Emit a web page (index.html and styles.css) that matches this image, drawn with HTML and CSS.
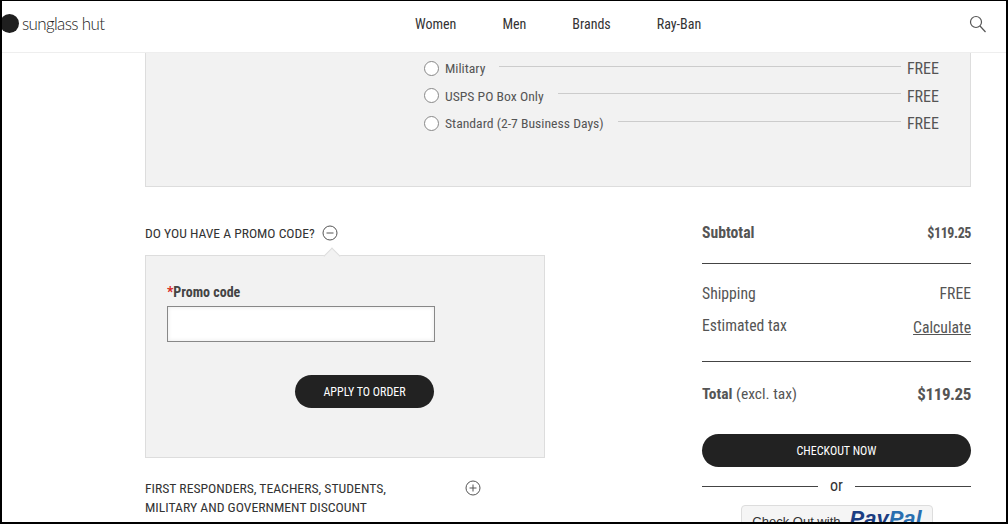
FILE: index.html
```html
<!DOCTYPE html>
<html lang="en">
<head>
  <meta charset="UTF-8">
  <title>Sunglass Hut - Cart</title>
  <link rel="stylesheet" href="styles.css">
</head>
<body>
  <div class="frame">
    <header class="topbar">
      <a class="logo"><span class="logo-dot"></span><span class="logo-text">sunglass hut</span></a>
      <nav class="nav">
        <a>Women</a>
        <a>Men</a>
        <a>Brands</a>
        <a>Ray-Ban</a>
      </nav>
      <svg class="search" width="18" height="18" viewBox="0 0 18 18" fill="none" stroke="#555" stroke-width="1.2">
        <circle cx="7" cy="7" r="5.5"/>
        <path d="M11 11l5.5 6"/>
      </svg>
    </header>

    <section class="shipping">
      <div class="ship-row">
        <span class="radio"></span><span class="ship-name">Military</span><span class="leader"></span><span class="ship-price">FREE</span>
      </div>
      <div class="ship-row">
        <span class="radio"></span><span class="ship-name">USPS PO Box Only</span><span class="leader"></span><span class="ship-price">FREE</span>
      </div>
      <div class="ship-row">
        <span class="radio"></span><span class="ship-name">Standard (2-7 Business Days)</span><span class="leader"></span><span class="ship-price">FREE</span>
      </div>
    </section>

    <div class="columns">
      <div class="left-col">
        <div class="promo-head">
          <span>DO YOU HAVE A PROMO CODE?</span>
          <svg class="toggle" width="16" height="16" viewBox="0 0 16 16" fill="none" stroke="#555" stroke-width="1">
            <circle cx="8" cy="8" r="7"/>
            <path d="M4.5 8h7"/>
          </svg>
        </div>
        <div class="promo-box">
          <label class="promo-label"><span class="req">*</span>Promo code</label>
          <input class="promo-input" type="text">
          <button class="btn btn-apply">APPLY TO ORDER</button>
        </div>
        <div class="discount">
          <span>FIRST RESPONDERS, TEACHERS, STUDENTS,<br>MILITARY AND GOVERNMENT DISCOUNT</span>
          <svg class="toggle" width="16" height="16" viewBox="0 0 16 16" fill="none" stroke="#555" stroke-width="1">
            <circle cx="8" cy="8" r="7"/>
            <path d="M4.5 8h7M8 4.5v7"/>
          </svg>
        </div>
      </div>

      <aside class="summary">
        <div class="sum-row sum-sub"><b>Subtotal</b><b class="sub-price">$119.25</b></div>
        <div class="sum-group">
          <div class="sum-row"><span>Shipping</span><span>FREE</span></div>
          <div class="sum-row sum-tax"><span>Estimated tax</span><a class="calc">Calculate</a></div>
        </div>
        <div class="sum-row sum-total"><span><b>Total</b> (excl. tax)</span><b class="total-price">$119.25</b></div>
        <button class="btn btn-checkout">CHECKOUT NOW</button>
        <div class="or"><span>or</span></div>
        <div class="paypal"><span class="pp-text">Check Out with</span><span class="pp-logo">Pay<i>Pal</i></span></div>
      </aside>
    </div>
  </div>
</body>
</html>
```

FILE: styles.css
```css
* {
  box-sizing: border-box;
}

body {
  margin: 0;
  font-family: Roboto, "Liberation Sans", sans-serif;
  font-stretch: 85%;
  color: #555;
  background: #fff;
}

.frame {
  width: 1008px;
  height: 524px;
  overflow: hidden;
  border: 2px solid #000;
  border-top-width: 1px;
  background: #fff;
}

.topbar {
  display: flex;
  align-items: center;
  height: 52px;
  padding-bottom: 6px;
  border-bottom: 1px solid #eee;
}

.logo {
  display: flex;
  align-items: center;
  width: 413px;
  flex: none;
}

.logo-dot {
  width: 19px;
  height: 19px;
  margin-left: -2px;
  border-radius: 50%;
  background: #1f1f1f;
}

.logo-text {
  margin-left: 3px;
  font-family: Lato, sans-serif;
  font-size: 17px;
  font-weight: 300;
  letter-spacing: -0.65px;
  color: #222;
}

.nav {
  display: flex;
  gap: 46px;
  font-size: 14px;
  color: #333;
}

.search {
  margin-left: auto;
  margin-right: 19px;
}

.shipping {
  width: 826px;
  height: 134px;
  margin-left: 143px;
  padding: 2px 31px 0 278px;
  background: #f2f2f2;
  border: 1px solid #ddd;
  border-top: 0;
}

.ship-row {
  display: flex;
  align-items: center;
  height: 27.5px;
  font-size: 13.7px;
}

.radio {
  width: 15px;
  height: 15px;
  margin: -1px 6px 0 0;
  border: 1px solid #888;
  border-radius: 50%;
  background: #fff;
}

.ship-name {
  margin-top: -1px;
}

.leader {
  flex: 1;
  height: 1px;
  margin: -5px 6px 0 14px;
  background: #ccc;
}

.ship-price {
  font-size: 16px;
}

.columns {
  display: flex;
  margin-left: 143px;
  width: 826px;
  padding-top: 36px;
}

.left-col {
  width: 400px;
}

.promo-head {
  display: flex;
  align-items: center;
  gap: 7px;
  height: 20px;
  font-size: 13.6px;
  color: #333;
}

.promo-box {
  display: flex;
  flex-direction: column;
  position: relative;
  height: 203px;
  margin-top: 12px;
  padding: 29px 21px 0;
  background: #f2f2f2;
  border: 1px solid #ddd;
}

.promo-box::before {
  content: "";
  position: absolute;
  top: -6px;
  left: 180px;
  width: 11px;
  height: 11px;
  background: #f2f2f2;
  border-top: 1px solid #ddd;
  border-left: 1px solid #ddd;
  transform: rotate(45deg);
}

.promo-label {
  font-size: 14px;
  line-height: 15px;
  font-weight: 700;
  color: #444;
}

.req {
  color: #d9281e;
}

.promo-input {
  width: 268px;
  height: 36px;
  margin-top: 6px;
  border: 1px solid #888;
  background: #fff;
  box-shadow: inset 0 0 4px #e8e8e8;
}

.btn {
  border: 0;
  border-radius: 17px;
  background: #222;
  color: #fff;
  font-family: inherit;
  font-stretch: 85%;
  font-size: 12px;
  font-weight: 400;
}

.btn-apply {
  width: 139px;
  height: 33px;
  margin: 33px 0 0 128px;
}

.discount {
  display: flex;
  align-items: flex-start;
  margin-top: 21px;
  font-size: 13.7px;
  line-height: 19px;
  color: #333;
}

.discount .toggle {
  margin: 1px 0 0 79px;
}

.summary {
  width: 269px;
  margin-left: auto;
  font-size: 15.7px;
  line-height: 18px;
}

.sum-row {
  display: flex;
  justify-content: space-between;
  align-items: center;
}

.sum-sub {
  height: 40px;
  padding-bottom: 20px;
}

.sub-price {
  font-size: 14px;
  letter-spacing: -0.4px;
}

.sum-group {
  padding: 21px 0 24px;
  border-top: 1px solid #444;
  border-bottom: 1px solid #444;
}

.sum-tax {
  margin-top: 12px;
}

.calc {
  margin-top: 4px;
  text-decoration: underline;
}

.sum-total {
  height: 24px;
  margin-top: 20px;
  font-size: 15.5px;
}

.total-price {
  font-size: 17px;
  letter-spacing: -0.4px;
}

.btn-checkout {
  display: block;
  width: 269px;
  height: 33px;
  margin-top: 28px;
}

.or {
  display: flex;
  align-items: center;
  gap: 12px;
  height: 20px;
  margin-top: 9px;
  font-size: 16px;
  color: #333;
}

.or::before,
.or::after {
  content: "";
  flex: 1;
  height: 1px;
  background: #444;
}

.paypal {
  display: flex;
  justify-content: center;
  align-items: baseline;
  gap: 9px;
  width: 192px;
  height: 34px;
  margin: 9px 0 0 39px;
  padding-top: 4px;
  border: 1px solid #ddd;
  border-radius: 4px;
  background: #f5f5f5;
  white-space: nowrap;
}

.pp-text {
  font-family: "Liberation Sans", sans-serif;
  font-size: 13px;
  color: #333;
}

.pp-logo {
  font-family: "Liberation Sans", sans-serif;
  font-size: 22px;
  font-weight: 700;
  font-style: italic;
  color: #1b3d82;
}

.pp-logo i {
  color: #2a6fb0;
}
```
